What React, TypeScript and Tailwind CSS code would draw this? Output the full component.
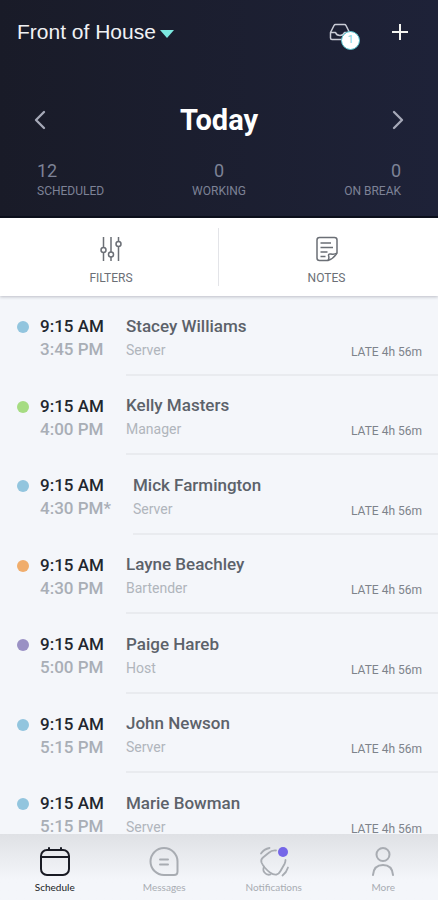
import type { ReactNode } from 'react';
import { ChevronLeft, ChevronRight } from 'lucide-react';
import clsx from 'clsx';

const stats = [
  { value: 12, label: 'SCHEDULED', align: 'text-left' },
  { value: 0, label: 'WORKING', align: 'text-center' },
  { value: 0, label: 'ON BREAK', align: 'text-right' },
];

const shifts = [
  { name: 'Stacey Williams', role: 'Server', end: '3:45 PM', dot: 'bg-[#92c5de]' },
  { name: 'Kelly Masters', role: 'Manager', end: '4:00 PM', dot: 'bg-[#a6dc82]' },
  { name: 'Mick Farmington', role: 'Server', end: '4:30 PM*', dot: 'bg-[#92c5de]' },
  { name: 'Layne Beachley', role: 'Bartender', end: '4:30 PM', dot: 'bg-[#f0ad6c]' },
  { name: 'Paige Hareb', role: 'Host', end: '5:00 PM', dot: 'bg-[#9a91c4]' },
  { name: 'John Newson', role: 'Server', end: '5:15 PM', dot: 'bg-[#92c5de]' },
  { name: 'Marie Bowman', role: 'Server', end: '5:15 PM', dot: 'bg-[#92c5de]' },
];

function InboxIcon() {
  return (
    <svg width="22" height="18" viewBox="0 0 22 18" fill="none" stroke="currentColor" strokeWidth="1.5" strokeLinejoin="round">
      <path d="M1.5 9.5 5 2.5Q5.5 1.5 6.5 1.5H15.5Q16.5 1.5 17 2.5L20.5 9.5V15Q20.5 16.5 19 16.5H3Q1.5 16.5 1.5 15Z" />
      <path d="M1.5 9.5H6.5Q7.5 12.5 11 12.5T15.5 9.5H20.5" />
    </svg>
  );
}

function FiltersIcon() {
  return (
    <svg width="24" height="26" viewBox="0 0 24 26" fill="none" stroke="currentColor" strokeWidth="1.5">
      <path d="M4.5 1V11.5M4.5 16.5V25M12 1V16M12 21V25M19.5 1V5.5M19.5 10.5V25" />
      <circle cx="4.5" cy="14" r="2.5" />
      <circle cx="12" cy="18.5" r="2.5" />
      <circle cx="19.5" cy="8" r="2.5" />
    </svg>
  );
}

function NotesIcon() {
  return (
    <svg width="24" height="26" viewBox="0 0 24 26" fill="none" stroke="currentColor" strokeWidth="1.5" strokeLinejoin="round">
      <path d="M22 17V4Q22 1.5 19.5 1.5H4.5Q2 1.5 2 4V22Q2 24.5 4.5 24.5H13Q19 22.5 22 17Z" />
      <path d="M13 24.5Q14.5 22 13.5 19.5Q13.5 17.5 16 18Q19.5 18.8 22 17" />
      <path d="M5.5 7H16M5.5 11.5H18M5.5 16H12.5M5.5 20.5H10.5" />
    </svg>
  );
}

function ScheduleIcon() {
  return (
    <svg width="32" height="32" viewBox="0 0 32 32" fill="none" stroke="currentColor" strokeWidth="2" strokeLinecap="round">
      <rect x="2" y="4" width="28" height="25" rx="6" />
      <path d="M2 11H30M10 2V4M22 2V4" />
    </svg>
  );
}

function MessagesIcon() {
  return (
    <svg width="32" height="32" viewBox="0 0 32 32" fill="none" stroke="currentColor" strokeWidth="2" strokeLinecap="round">
      <path d="M16 2A13.5 13.5 0 0 0 16 29H26Q29.5 29 29.5 25.5V15.5A13.5 13.5 0 0 0 16 2Z" />
      <path d="M12 13.5H20M12 18.5H20" />
    </svg>
  );
}

function NotificationsIcon() {
  return (
    <svg width="32" height="32" viewBox="0 0 32 32" fill="none" stroke="currentColor" strokeWidth="1.8" strokeLinecap="round">
      <path d="M18 4.5Q14 4 10.500 7L5 11.500Q2.500 13.500 3.500 16.500Q6 22 12 26.500Q15.500 29 18.500 28.500Q21 28 22.500 25L26.500 18Q27.500 16 27.500 14" />
      <path d="M3 7.500Q6 3 11.500 2" />
      <path d="M30 21.500Q28.500 26.500 24.500 29.500" />
      <path d="M6 20.500Q4.500 24 6.500 26.500Q9 29.500 12.500 28.500" />
    </svg>
  );
}

function MoreIcon() {
  return (
    <svg width="32" height="32" viewBox="0 0 32 32" fill="none" stroke="currentColor" strokeWidth="2" strokeLinecap="round">
      <circle cx="16" cy="8.5" r="6.5" />
      <path d="M6 29C6.5 22.5 10 19 16 19S25.5 22.5 26 29" />
    </svg>
  );
}

const tabs: { label: string; icon: ReactNode; active?: boolean; unread?: boolean }[] = [
  { label: 'Schedule', icon: <ScheduleIcon />, active: true },
  { label: 'Messages', icon: <MessagesIcon /> },
  { label: 'Notifications', icon: <NotificationsIcon />, unread: true },
  { label: 'More', icon: <MoreIcon /> },
];

export default function App() {
  return (
    <div className="flex h-screen flex-col bg-[#f4f6fa] font-[Roboto,sans-serif]">
      {/* Header */}
      <header className="shrink-0 border-b-2 border-[#0b0e1a] bg-linear-to-r from-[#191b28] to-[#1e2238] pt-4 pb-4">
        <div className="flex h-8 items-center justify-between pr-[29px] pl-[17px]">
          <label className="flex items-center gap-1">
            <select
              aria-label="Department"
              className="appearance-none bg-transparent font-['Liberation_Sans',sans-serif] text-[21px] leading-8 text-[#f0f1f4] outline-none"
            >
              <option>Front of House</option>
            </select>
            <svg width="14" height="8" viewBox="0 0 14 8" className="mt-1 fill-[#7ce8e0]">
              <path d="M0 0H14L7 8Z" />
            </svg>
          </label>
          <div className="flex items-center gap-10">
            <button aria-label="Inbox" className="relative text-[#c9cbd6]">
              <InboxIcon />
              <span className="absolute top-2 left-3 flex size-[19px] items-center justify-center rounded-full border border-[#55c3cd] bg-white text-[11px] text-[#7fcfd8]">
                1
              </span>
            </button>
            <button aria-label="Add shift" className="text-[#f4f4f0]">
              <svg width="18" height="18" viewBox="0 0 18 18" fill="none" stroke="currentColor" strokeWidth="2">
                <path d="M9 1V17M1 9H17" />
              </svg>
            </button>
          </div>
        </div>

        <div className="mt-14 flex h-8 items-center justify-between px-6">
          <button aria-label="Previous day" className="text-[#a6a9b8]">
            <ChevronLeft size={32} strokeWidth={1.75} />
          </button>
          <h1 className="text-[29px] leading-8 font-bold text-white">Today</h1>
          <button aria-label="Next day" className="text-[#a6a9b8]">
            <ChevronRight size={32} strokeWidth={1.75} />
          </button>
        </div>

        <div className="mt-6 grid grid-cols-3 px-[37px]">
          {stats.map((stat) => (
            <div key={stat.label} className={clsx('text-[#7d8296]', stat.align)}>
              <div className="text-[18px] leading-[22px]">{stat.value}</div>
              <div className="text-[12px] leading-[18px]">{stat.label}</div>
            </div>
          ))}
        </div>
      </header>

      {/* Toolbar */}
      <div className="z-10 grid h-[78px] shrink-0 grid-cols-2 bg-white py-2.5 text-[12px] text-[#6b6f76] shadow-[0_1px_3px_rgba(60,64,80,0.3)]">
        <button className="flex flex-col items-center justify-between border-r border-[#e3e4e8] pt-2 pl-1">
          <FiltersIcon />
          <span className="leading-4">FILTERS</span>
        </button>
        <button className="flex flex-col items-center justify-between pt-2 pr-1">
          <NotesIcon />
          <span className="leading-4">NOTES</span>
        </button>
      </div>

      {/* Shift list */}
      <ul className="min-h-0 flex-1 overflow-hidden pl-[17px]">
        {shifts.map((shift) => (
          <li key={shift.name} className="flex odd:h-[80px] even:h-[79px]">
            <span className={clsx('mt-[25px] mr-[11px] size-3 shrink-0 rounded-full', shift.dot)} />
            <div className="mr-[22px] min-w-16 pt-[19px] text-[17px] leading-[23px] font-medium">
              <div className="text-[#22262e]">9:15 AM</div>
              <div className="text-[#a9aeb6]">{shift.end}</div>
            </div>
            <div className="flex flex-1 items-end justify-between border-b-2 border-[#e9ebef] pr-4 pb-3">
              <div>
                <div className="text-[17px] leading-[24px] font-medium text-[#5c626a]">{shift.name}</div>
                <div className="text-[14px] leading-[24px] text-[#b0b5bc]">{shift.role}</div>
              </div>
              <span className="text-[12px] leading-5 text-[#7e838b]">LATE 4h 56m</span>
            </div>
          </li>
        ))}
      </ul>

      {/* Bottom tabs */}
      <nav className="z-10 grid h-[66px] shrink-0 grid-cols-4 bg-linear-to-b from-[#dfe1e5] to-[#f4f6fa] to-70% pt-3 font-[Lato,sans-serif]">
        {tabs.map((tab) => (
          <a
            key={tab.label}
            href="#"
            className={clsx('flex flex-col items-center', tab.active ? 'text-[#191b24]' : 'text-[#a8acb2]')}
          >
            <span className="relative">
              {tab.icon}
              {tab.unread && <span className="absolute top-px right-0.5 size-2.5 rounded-full bg-[#7566e8]" />}
            </span>
            <span className="text-[10px] leading-[18px]">{tab.label}</span>
          </a>
        ))}
      </nav>
    </div>
  );
}
